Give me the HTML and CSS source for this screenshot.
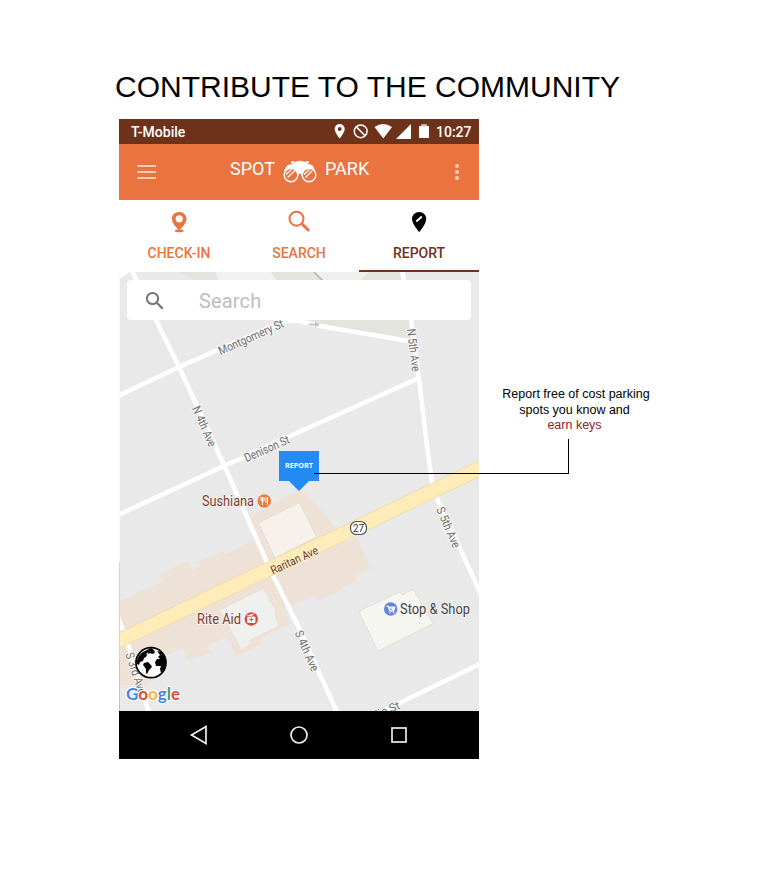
FILE: index.html
```html
<!DOCTYPE html>
<html lang="en">
<head>
<meta charset="utf-8">
<title>Spot Park</title>
<link rel="stylesheet" href="styles.css">
</head>
<body>
<main class="page">
  <h1 class="title">CONTRIBUTE TO THE COMMUNITY</h1>
  <div class="stage">
    <section class="phone">
      <div class="status">
        <span class="carrier">T-Mobile</span>
        <svg class="status-icons" width="100" height="25" viewBox="330 119 100 25">
          <path fill="#fff" fill-rule="evenodd" d="M339.700 124c-2.900 0-5 2.200-5 5 0 3.500 5 9.500 5 9.500s5-6 5-9.500c0-2.800-2.100-5-5-5zm0 3.100a1.900 1.900 0 1 1 0 3.800 1.900 1.900 0 0 1 0-3.800z"/>
          <circle cx="360.700" cy="131.300" r="6.400" fill="none" stroke="#fff" stroke-width="1.500"/>
          <path d="M356.300 126.900l8.800 8.800" stroke="#fff" stroke-width="1.500"/>
          <path fill="#fff" d="M374.500 127q8.700-6 17.500 0l-8.700 11.500z"/>
          <path fill="#fff" d="M411 124v15h-15z"/>
          <path fill="#fff" d="M419 126h10v12h-10z"/><path fill="#c9ada1" d="M421 124h6v2h-6z"/>
        </svg>
        <span class="clock">10:27</span>
      </div>
      <header class="appbar">
        <svg class="menu" width="20" height="14" viewBox="0 0 20 14"><path d="M.5 1h18.500M.5 7h18.500M.5 13h18.500" stroke="#f9cdb5" stroke-width="1.800"/></svg>
        <div class="brand">
          <span>SPOT</span>
          <svg class="binoculars" width="34" height="24" viewBox="0 0 34 24">
            <path fill="#fff" d="M5 5l4-1 2-2 6-1.300L23 2l2 2 4 1q3 3 3 9l-4-5-7 2-2 5h-4l-2-5-7-2-5 5q0-6 4-9z"/>
            <path d="M8 2.500l3-.5M23 2l3 .5" stroke="#fff" stroke-width="2"/>
            <g fill="#e97440" stroke="#fff" stroke-width="1.400"><circle cx="8" cy="15" r="6.800"/><circle cx="26" cy="15" r="6.800"/></g>
            <path d="M3 14.500l5.500-5M4.500 17.500l7.500-7M21 14.500l5.500-5M22.500 17.500l6.500-6.500" stroke="#fff" stroke-width="1.200"/>
            <circle cx="17" cy="15" r="1.500" fill="#e97440"/>
          </svg>
          <span>PARK</span>
        </div>
        <svg class="more" width="6" height="18" viewBox="0 0 6 18" fill="#f9cdb5"><circle cx="3" cy="3" r="2.100"/><circle cx="3" cy="9" r="2.100"/><circle cx="3" cy="15" r="2.100"/></svg>
      </header>
      <nav class="tabs">
        <div class="tab">
          <svg width="24" height="24" viewBox="0 0 24 24" fill="#e97440"><path fill-rule="evenodd" d="M12.200 2C7.700 2 5 5 5 9c0 3.500 3 7.500 7.200 11C16.500 16.500 19.500 12.500 19.500 9c0-4-2.800-7-7.300-7zm0 3.200a3.600 3.600 0 1 1 0 7.200 3.600 3.600 0 0 1 0-7.200z"/><ellipse cx="12.200" cy="20.700" rx="4.300" ry="1.500"/></svg>
          <span>CHECK-IN</span>
        </div>
        <div class="tab">
          <svg width="24" height="24" viewBox="0 0 24 24" fill="none" stroke="#e97440"><circle cx="9.500" cy="8.700" r="7" stroke-width="2"/><path d="M14.800 13.700l1.800 1.600" stroke-width="2"/><path d="M16.200 15.200l5 4.800" stroke-width="3" stroke-linecap="round"/></svg>
          <span>SEARCH</span>
        </div>
        <div class="tab active">
          <svg width="24" height="24" viewBox="0 0 24 24"><path d="M12.200 2C8 2 5 5 5 9c0 5 7.200 13 7.200 13s7-8 7-13c0-4-3-7-7-7z"/><path d="M9.300 11.500l5.500-5" stroke="#fff" stroke-width="1.900"/></svg>
          <span>REPORT</span>
        </div>
      </nav>
      <div class="map">
        <svg class="canvas" width="360" height="439" viewBox="119 272 360 439">
          <path fill="#e9e9e9" d="M119 272h360v439H119z"/>
          <!-- parks and blocks -->
          <path fill="#f1f1ef" d="M210 272h70v8h-70z"/>
          <path fill="#e3e4de" d="M180 272h36l2 10h-20zM271 272h132l8 48-2 21-110-21z"/>
          <path fill="#efefed" d="M314 272h55l-9 8h-36z"/>
          <path d="M314 272l9 9" stroke="#b5b5b5" stroke-width="1.500"/>
          <path fill="#eee2d7" d="M119 601l43-19-3-8 29-13 4 9 8-3-3-5 26-11 3 3 30-15-8-21 51-28 5 1 67 77-16 8 2 4-15 8v2l-23 10-4-5-31 13 7 15-30 15 1 6-26 12-9-19-18 8 2 8-24 8-4-13-16 7-20 30h-33z"/>
          <path fill="#e9e9e9" d="M304 489l67 79V485z"/>
          <path fill="#eee2d7" d="M299 490l5 1 23 50-10 10-25-40zM325 555l32-18 14 31-22 12z"/>
          <path fill="#f8f0ea" stroke="#d6cbc3" stroke-width=".8" stroke-dasharray="1 1" d="M258.500 523l41-20.500 17 34.500-41.500 21z"/>
          <path fill="#f0f0ef" stroke="#dcd9d6" stroke-width=".8" stroke-dasharray="1 1" d="M220 610l43-21.500 13 22.500-1 4 4 11-29 14v4l-8.500 6z"/>
          <path fill="#f6f6f1" stroke="#cec9bd" stroke-width=".8" stroke-dasharray="1 1" d="M360 614v-3.500l40-18.500 2 3 11.500-5.500 19.500 34-55 27.500z"/>
          <!-- streets -->
          <g fill="none" stroke="#fff" stroke-width="4.500">
            <path d="M131 269l48 98 45 98 45 102 30 61 38 84"/>
            <path d="M118 396l61-29 105-46h16l20 5 89 15"/>
            <path d="M118 515l106-49 75-34 120-54"/>
            <path d="M402 270l9 50 8 59 8 67 6 43 6 14 42 91"/>
            <path d="M385 710l95-46"/>
            <path d="M118 617l11 30 20 66M119 276l9-5"/>
          </g>
          <path d="M116 642L482 467.500" stroke="#eed9a8" stroke-width="15"/>
          <path d="M116 642L482 467.500" stroke="#ffecb9" stroke-width="13.400"/>
          <path d="M309 323.500h6v-2l5 3-5 3v-2h-6z" fill="#c2c6dc"/>
          <path d="M119.500 272v439" stroke="#fafafa"/><path d="M119.500 562v98" stroke="#cde3a5"/><path d="M119.500 660v51" stroke="#a5cdf8"/>
          <!-- street names -->
          <g class="street">
            <text transform="translate(252.500 341) rotate(-24)" textLength="70" lengthAdjust="spacingAndGlyphs">Montgomery St</text>
            <text transform="translate(268.500 452.500) rotate(-24)" textLength="48" lengthAdjust="spacingAndGlyphs">Denison St</text>
            <text transform="translate(200.500 428) rotate(66.500)" textLength="43" lengthAdjust="spacingAndGlyphs">N 4th Ave</text>
            <text transform="translate(409.500 350.500) rotate(83)" textLength="43" lengthAdjust="spacingAndGlyphs">N 5th Ave</text>
            <text transform="translate(444.500 529) rotate(66.500)" textLength="43" lengthAdjust="spacingAndGlyphs">S 5th Ave</text>
            <text transform="translate(303 652.500) rotate(66.500)" textLength="43" lengthAdjust="spacingAndGlyphs">S 4th Ave</text>
            <text transform="translate(132 674.500) rotate(72)" textLength="43" lengthAdjust="spacingAndGlyphs">S 3rd Ave</text>
            <text transform="translate(389.500 713.500) rotate(-24)" textLength="25" lengthAdjust="spacingAndGlyphs">lia St</text>
            <text class="avenue" transform="translate(296 564) rotate(-25)" textLength="51" lengthAdjust="spacingAndGlyphs">Raritan Ave</text>
          </g>
          <!-- route shield -->
          <rect x="350.500" y="521.500" width="16" height="13" rx="6" fill="#fff" stroke="#555" stroke-width="1.200"/>
          <text class="route" x="358.500" y="531.800">27</text>
          <!-- places -->
          <text class="place" x="202" y="506" textLength="52" lengthAdjust="spacingAndGlyphs">Sushiana</text>
          <circle cx="264.300" cy="501" r="6.700" fill="#ec7c42"/>
          <path d="M261 497v3q0 1.500 1.500 1.500V505M264 497v3q0 1.500-1.500 1.500M262.500 497v4M267.500 505v-8q-2 1-2 5h2" fill="none" stroke="#fff" stroke-width="1"/>
          <text class="place" x="197" y="624" textLength="44" lengthAdjust="spacingAndGlyphs">Rite Aid</text>
          <circle cx="251.300" cy="619" r="6.700" fill="#d94a43"/>
          <path d="M247.500 617h7.500v5.500h-7.500zM247 615.500h5l2-2" fill="#fff" stroke="#fff" stroke-width=".8"/><path d="M251.300 617.500v4M249.300 619.500h4" stroke="#d94a43"/>
          <circle cx="390.700" cy="609" r="6.700" fill="#6783dc"/>
          <path d="M386.500 606h2l1.300 5h4.500M388.500 607h6.500l-1 3.500h-4.500z" fill="#fff" stroke="#fff" stroke-width=".9"/><circle cx="390" cy="612.600" r=".8" fill="#fff"/><circle cx="393.500" cy="612.600" r=".8" fill="#fff"/>
          <text class="place dark" x="400" y="614" textLength="70" lengthAdjust="spacingAndGlyphs">Stop &amp; Shop</text>
          <!-- report marker -->
          <path fill="#238bf3" d="M279 451h40v30h-10l-10 10-10-10h-10z"/>
          <text class="marker" x="285" y="468" textLength="28" lengthAdjust="spacingAndGlyphs">REPORT</text>
          <!-- globe -->
          <circle cx="151" cy="662.700" r="15" fill="#fff" stroke="#000" stroke-width="1.700"/>
          <path d="M137 661q1-6 6-9l3 1 1 2-1 2-2 1-1 3-3 1-1 3-2-1zM143 652l4-2 1 2-2 2zM147 650l4-2 3 2 1 3-3 1-2-1-2 1zM144 663l4-1 3 3 1 2-3 3-2 4-1-1v-4l-3-4zM157 651l4 1q4 4 5 10l-1 7-4 4-1-4 1-3-5 0-1-4 2-3 3 0-2-2 2-2z"/>
          <text class="logo" x="126" y="699.500" textLength="54" lengthAdjust="spacingAndGlyphs"><tspan fill="#4285e8">G</tspan><tspan fill="#df4b40">o</tspan><tspan fill="#f4b73d">o</tspan><tspan fill="#4285e8">g</tspan><tspan fill="#43a35a">l</tspan><tspan fill="#df4b40">e</tspan></text>
        </svg>
        <div class="searchbox">
          <svg width="20" height="20" viewBox="0 0 20 20" fill="none" stroke="#757575" stroke-width="2"><circle cx="7.500" cy="7.500" r="5.600"/><path d="M11.500 11.500l6.300 6.300" stroke-width="2.300"/></svg>
          <span>Search</span>
        </div>
      </div>
      <footer class="navbar">
        <svg width="22" height="22" viewBox="0 0 22 22"><path d="M18 2.500v17L3.500 11z"/></svg>
        <svg width="22" height="22" viewBox="0 0 22 22"><circle cx="11" cy="11" r="8"/></svg>
        <svg width="22" height="22" viewBox="0 0 22 22"><rect x="4" y="4" width="14" height="14"/></svg>
      </footer>
    </section>
    <aside class="note">Report free of cost parking<br><span class="nudge">spots you know and</span><br><span class="nudge earn">earn keys</span></aside>
    <div class="connector"></div>
  </div>
</main>
</body>
</html>
```

FILE: styles.css
```css
* { box-sizing: border-box; }
body { margin: 0; background: #fff; font-family: Roboto, sans-serif; }
svg { display: block; flex: none; }
.page { height: 893px; padding: 70px 0 0; overflow: hidden; }
.title {
  margin: 0 0 15px 115px;
  font: 400 30px/34px "Liberation Sans", Arial, sans-serif;
  white-space: nowrap;
}
.stage { position: relative; display: flex; margin-left: 119px; }
.phone { width: 360px; height: 640px; display: flex; flex-direction: column; }
.status {
  height: 25px; display: flex; align-items: center;
  padding: 1px 8px 0 12px; background: #6e321b; color: #fff;
  font-size: 14px; font-weight: 500; line-height: 25px;
}
.status-icons { margin: -1px 6px 0 auto; }
.clock { width: 35px; white-space: nowrap; }
.appbar {
  height: 56px; display: flex; align-items: center;
  padding: 0 19px 0 18px; background: #e97440; color: #fff;
}
.brand { display: flex; align-items: center; gap: 8px; font-size: 18px; line-height: 24px; margin: -6px auto 0 73px; }
.binoculars { margin-top: 5px; }
.tabs { height: 72px; display: grid; grid-template-columns: repeat(3, 1fr); }
.tab {
  display: flex; flex-direction: column; align-items: center; gap: 11px;
  padding-top: 10px; color: #e97440;
  font-size: 14px; font-weight: 500; line-height: 16px;
}
.tab.active { color: #6e321b; border-bottom: 2px solid #6e321b; }
.map { position: relative; height: 439px; overflow: hidden; padding: 8px; }
.canvas { position: absolute; inset: 0; }
.searchbox {
  position: relative; height: 40px; border-radius: 4px; background: #fff;
  display: flex; align-items: center; gap: 34px; padding: 2px 0 0 18px;
  color: #bebebe; font-size: 20px; letter-spacing: .15px;
}
.searchbox svg { margin-top: -1px; }
.navbar { height: 48px; background: #000; display: flex; justify-content: center; align-items: center; gap: 78px; }
.navbar svg { fill: none; stroke: #eee; stroke-width: 1.7; }
.street text {
  font-size: 12px; text-anchor: middle; fill: #707070;
  paint-order: stroke; stroke: #f7f7f7; stroke-width: 2px;
}
.street .avenue { fill: #70402e; stroke: #fff0ca; }
.route { font-size: 10px; text-anchor: middle; fill: #333; }
.place { font-size: 14px; fill: #7b4035; paint-order: stroke; stroke: #f7f2ef; stroke-width: 2px; }
.place.dark { fill: #444; stroke: #f5f5f5; }
.marker { font: 700 7px "Open Sans", sans-serif; fill: #fff; }
.logo { font: 700 17.5px Lato, sans-serif; paint-order: stroke; stroke: #fff; stroke-width: 2px; }
.note {
  width: 194px; padding-top: 268px; text-align: center;
  font: 12.5px/15.5px "Liberation Sans", Arial, sans-serif;
}
.nudge { margin-right: 3px; }
.earn { color: #932024; }
.connector {
  position: absolute; left: 195px; top: 320px; width: 255px; height: 35px;
  border: solid #000; border-width: 0 1px 1px 0;
}
```
